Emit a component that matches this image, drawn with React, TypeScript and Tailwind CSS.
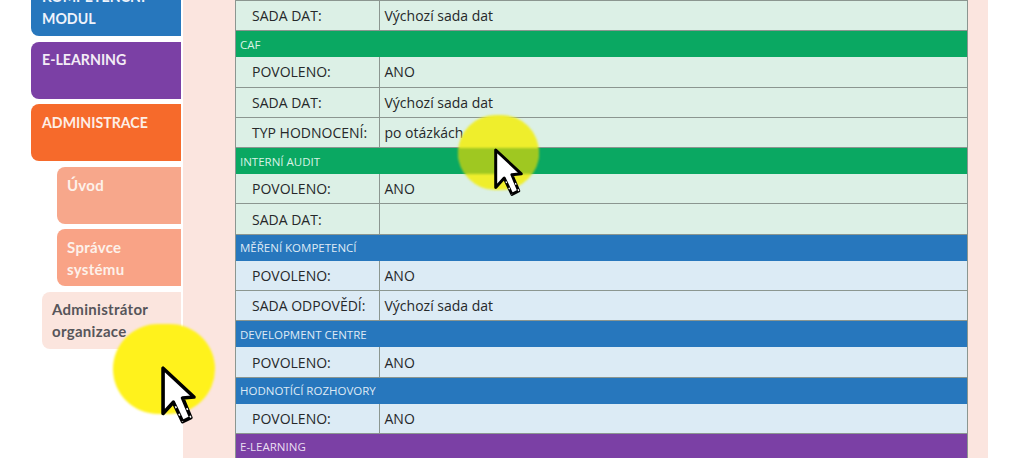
const rows: { type: "head" | "row"; label: string; value?: string; tone: "green" | "blue" | "purple" }[] = [
  { type: "row", label: "SADA DAT:", value: "Výchozí sada dat", tone: "green" },
  { type: "head", label: "CAF", tone: "green" },
  { type: "row", label: "POVOLENO:", value: "ANO", tone: "green" },
  { type: "row", label: "SADA DAT:", value: "Výchozí sada dat", tone: "green" },
  { type: "row", label: "TYP HODNOCENÍ:", value: "po otázkách", tone: "green" },
  { type: "head", label: "INTERNÍ AUDIT", tone: "green" },
  { type: "row", label: "POVOLENO:", value: "ANO", tone: "green" },
  { type: "row", label: "SADA DAT:", value: "", tone: "green" },
  { type: "head", label: "MĚŘENÍ KOMPETENCÍ", tone: "blue" },
  { type: "row", label: "POVOLENO:", value: "ANO", tone: "blue" },
  { type: "row", label: "SADA ODPOVĚDÍ:", value: "Výchozí sada dat", tone: "blue" },
  { type: "head", label: "DEVELOPMENT CENTRE", tone: "blue" },
  { type: "row", label: "POVOLENO:", value: "ANO", tone: "blue" },
  { type: "head", label: "HODNOTÍCÍ ROZHOVORY", tone: "blue" },
  { type: "row", label: "POVOLENO:", value: "ANO", tone: "blue" },
  { type: "head", label: "E-LEARNING", tone: "purple" },
];

function Cursor({ className }: { className: string }) {
  return (
    <svg viewBox="0 0 34 58" className={className}>
      <path
        d="M2 2 L2 46 L12 35 L21 54 L29 50 L21 31 L32 30 Z"
        fill="#fff"
        stroke="#000"
        strokeWidth="3.5"
        strokeLinejoin="round"
      />
      {/* dotted look of the pointer tail */}
      <path d="M14 39 L21 54 M29 50 L23 36" stroke="#fff" strokeWidth="1.5" strokeDasharray="2 6" fill="none" />
    </svg>
  );
}

export default function App() {
  return (
    <div className="relative h-[458px] w-[1023px] overflow-hidden bg-white font-['Open_Sans',sans-serif]">
      <div className="flex h-full">
        {/* Side menu */}
        <div className="-mt-[21px] flex w-[183px] shrink-0 flex-col items-end gap-[5.5px] pr-[2px] font-['Lato',sans-serif] text-[15px] font-bold leading-[22px]">
          <div className="h-[57px] w-[150px] rounded-l-lg bg-[#2777bd] px-[11px] pt-[7px] text-[14.2px] text-[#eef3fb]">
            KOMPETENČNÍ MODUL
          </div>
          <div className="h-[57px] w-[150px] rounded-l-lg bg-[#7b40a5] px-[11px] pt-[7px] text-[14.2px] text-[#f3ecf6]">E-LEARNING</div>
          <div className="h-[57px] w-[150px] rounded-l-lg bg-[#f66a2b] px-[11px] pt-[8px] text-[14.2px] text-[#fdeee6]">ADMINISTRACE</div>
          <div className="h-[57px] w-[124px] rounded-l-lg bg-[#f7a78b] px-[10px] pt-[7px] tracking-[0.3px] text-[#fdf1ea]">Úvod</div>
          <div className="h-[57px] w-[124px] rounded-l-lg bg-[#f9a386] px-[10px] pt-[7px] tracking-[0.3px] text-[#fdf1ea]">Správce systému</div>
          <div className="h-[57px] w-[139px] rounded-l-lg bg-[#fbe5de] px-[10px] pt-[6px] tracking-[0.3px] text-[#57555a]">
            Administrátor organizace
          </div>
        </div>

        {/* Detail panel */}
        <div className="h-full w-[805px] shrink-0 bg-[#fbe5df] pl-[52px]">
          <div className="w-[733px] border-x-[1.5px] border-t-[1.5px] border-[#8b9690] text-[14px]">
            {rows.map((r, i) =>
              r.type === "head" ? (
                <div
                  key={i}
                  className={`flex h-[26px] items-center px-[4px] text-[11.5px] ${
                    r.tone === "green"
                      ? "bg-[#0aa862] text-[#d9f3e5]"
                      : r.tone === "blue"
                        ? "bg-[#2777bd] text-[#dfeaf5]"
                        : "bg-[#7b40a5] text-[#eadff1]"
                  }`}
                >
                  {r.label}
                </div>
              ) : (
                <div
                  key={i}
                  className={`flex h-[30.3px] border-b-[1.5px] border-[#8b9690] text-[#26282a] ${
                    r.tone === "green" ? "bg-[#dcf0e6]" : "bg-[#dcebf5]"
                  }`}
                >
                  <div className="flex w-[144px] shrink-0 items-center border-r-[1.5px] border-[#8b9690] pl-[16px]">
                    {r.label}
                  </div>
                  <div className="flex items-center pl-[4.5px] text-[14px]">{r.value}</div>
                </div>
              ),
            )}
          </div>
        </div>
      </div>

      {/* Click highlights */}
      <div className="absolute left-[113px] top-[324px] h-[90px] w-[102px] rounded-full bg-[#fff21c] blur-[1px]" />
      <Cursor className="absolute left-[161px] top-[366px] h-[60px] w-[35px]" />
      <div className="absolute left-[458px] top-[115px] h-[75px] w-[81px] overflow-hidden rounded-full bg-[#efee2c] blur-[1px]">
        <div className="mt-[33px] h-[26px] bg-[#9fc821]" />
      </div>
      <Cursor className="absolute left-[494px] top-[148px] h-[50px] w-[29px]" />
    </div>
  );
}
